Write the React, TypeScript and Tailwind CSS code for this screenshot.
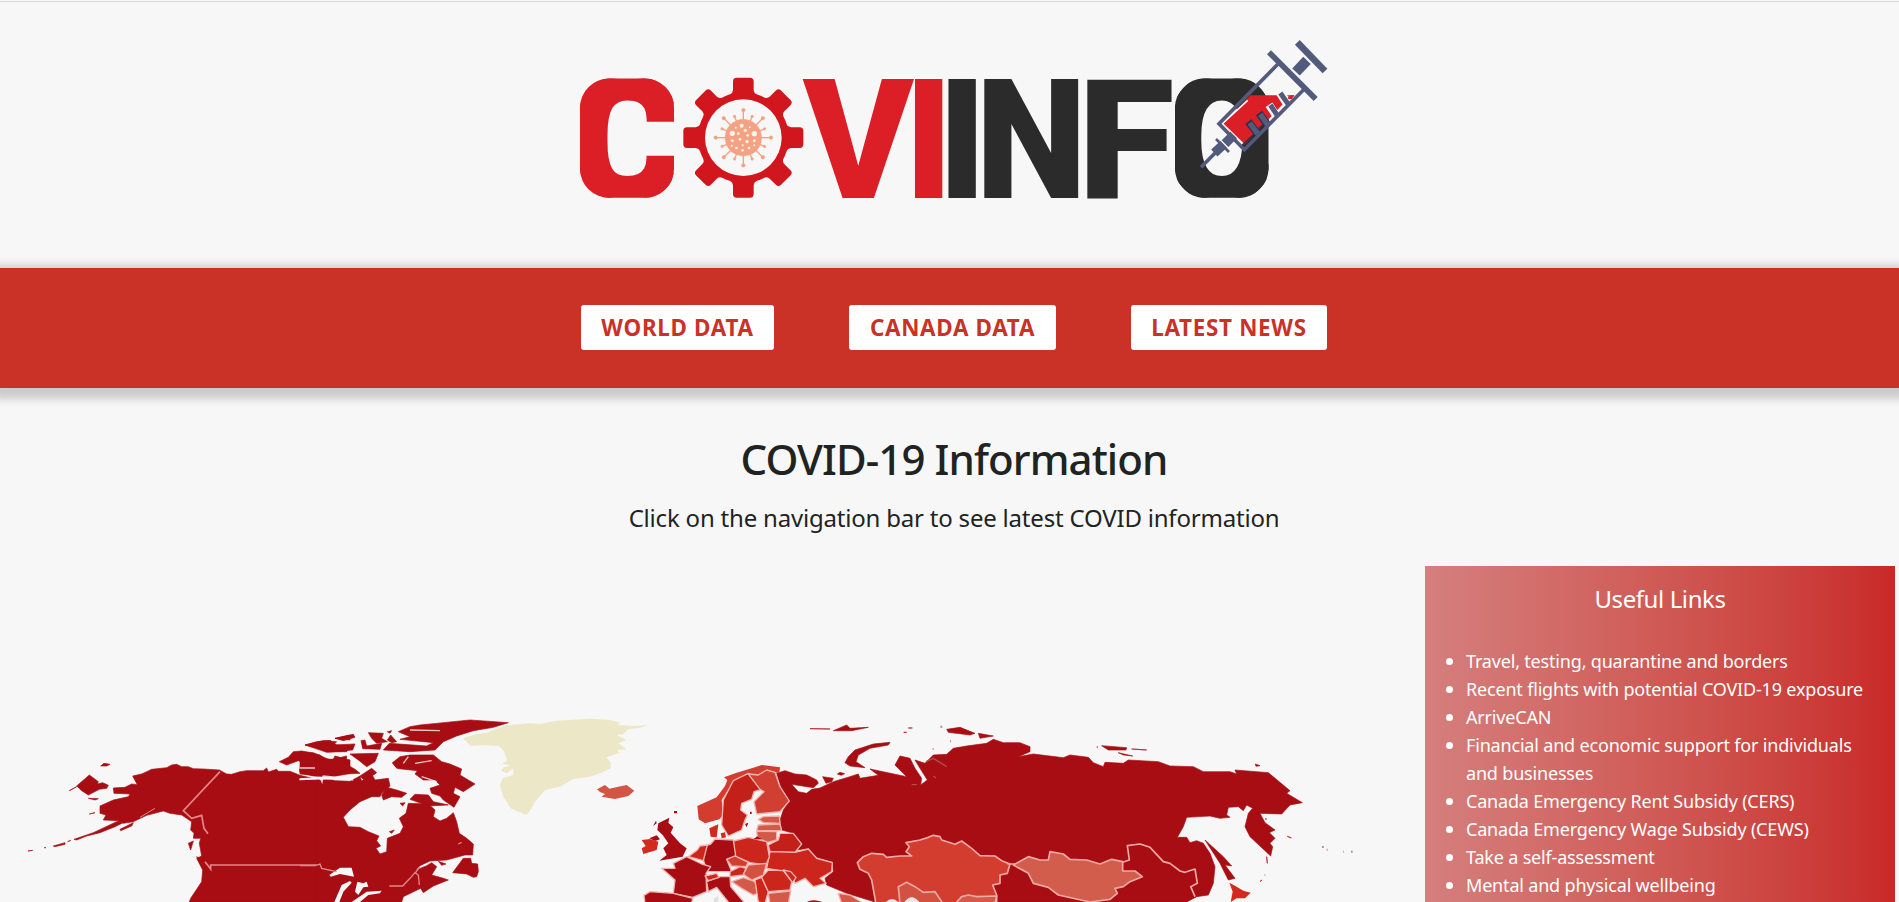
import React from "react";

const DARK = "#a70d13";
const RED = "#cb251c";
const MID = "#d23d30";
const PALE = "#d35a49";
const SEA = "#f7f7f7";

const links = [
  "Travel, testing, quarantine and borders",
  "Recent flights with potential COVID-19 exposure",
  "ArriveCAN",
  "Financial and economic support for individuals and businesses",
  "Canada Emergency Rent Subsidy (CERS)",
  "Canada Emergency Wage Subsidy (CEWS)",
  "Take a self-assessment",
  "Mental and physical wellbeing",
];

const virusDots = [
  [545, 317, 6], [517, 340, 8], [583, 341, 8], [556, 331, 5], [527, 323, 3], [569, 322, 3], [535, 341, 4], [563, 346, 4],
  [540, 358, 4], [517, 362, 4], [561, 365, 5], [583, 362, 4], [529, 384, 4], [548, 391, 4], [567, 384, 4], [515, 377, 3],
  [548, 376, 3], [583, 376, 3],
];

function Letter({ c, x, y = 198, sx, sy = 0.839, fill, bold = 0 }: { c: string; x: number; y?: number; sx: number; sy?: number; fill: string; bold?: number }) {
  return (
    <text transform={`translate(${x} ${y}) scale(${sx} ${sy})`} fontSize={200} fill={fill} stroke={fill} strokeWidth={bold} className="font-['Roboto',sans-serif] font-black">
      {c}
    </text>
  );
}

function Logo() {
  const r = "#dc1f26";
  const k = "#2b2b2b";
  return (
    <svg width="750" height="215" viewBox="579 30 750 215" role="img" className="block overflow-visible">
      <clipPath id="logo-c">
        <rect x="580" y="78.5" width="94" height="119.3" rx="29" />
      </clipPath>
      <clipPath id="logo-o">
        <rect x="1175" y="78.5" width="93.5" height="119.3" rx="29" />
      </clipPath>
      <g clipPath="url(#logo-c)">
        <Letter c="C" x={568.1} y={200.4} sx={0.885} sy={0.87} fill={r} bold={6} />
      </g>
      <Letter c="V" x={803} sx={0.837} fill={r} />
      <Letter c="I" x={904.5} sx={0.8} fill={r} />
      <Letter c="I" x={938} sx={0.8} fill={k} />
      <Letter c="N" x={975.8} sx={0.79} fill={k} />
      <Letter c="F" x={1077.7} sx={0.885} fill={k} />
      <g clipPath="url(#logo-o)">
        <Letter c="O" x={1163.4} y={200.4} sx={0.845} sy={0.87} fill={k} bold={6} />
      </g>
      <g transform="translate(560 20) scale(.33333)">
        <g fill="#d2161e">
          {[0, 45, 90, 135, 180, 225, 270, 315].map((a) => (
            <path key={a} transform={`rotate(${a} 550 353)`} d="M519 240V184Q519 173 530 173H570Q581 173 581 184V210Q582 220 590 224V240H510V224Q518 220 519 210Z" />
          ))}
          <circle cx="550" cy="353" r="136" />
        </g>
        <circle cx="550" cy="353" r="115" fill={SEA} />
        <g fill="#f4a184" stroke="#f4a184">
          {[0, 45, 90, 135, 180, 225, 270, 315].map((a) => (
            <g key={a} transform={`rotate(${a} 550 353)`}>
              <path d="M550 300V270" strokeWidth="4" />
              <circle cx="550" cy="270" r="5.5" />
            </g>
          ))}
          {[22.5, 67.5, 112.5, 157.5, 202.5, 247.5, 292.5, 337.5].map((a) => (
            <g key={a} transform={`rotate(${a} 550 353)`}>
              <path d="M550 300V284" strokeWidth="4" />
              <circle cx="550" cy="284" r="4" />
            </g>
          ))}
          <circle cx="550" cy="353" r="55" />
        </g>
        <g fill="#fbf3ee">
          {virusDots.map(([x, y, s]) => (
            <circle key={`${x}-${y}`} cx={x} cy={y} r={s} />
          ))}
        </g>
      </g>
      <g transform="translate(1195 35) scale(.33333)" stroke="#525b7b" fill="none">
        <path d="M84 267L166 181H268L266 200L286 181H298L290 192L278 192L148 330Z" fill="#dc1f26" stroke="none" />
        <path d="M228 256L268 216L300 190L325 165" stroke={SEA} strokeWidth="6" />
        <path d="M158 196L82 266L146 328" stroke={SEA} strokeWidth="5" />
        <path d="M138 334L184 291L160 266M192 280L206 268L188 244" stroke="#33304a" strokeWidth="5" />
        <path d="M188 296L160 260M218 270L192 234" stroke="#33304a" strokeWidth="23" />
        <path d="M188 296L164 264M218 270L196 238" strokeWidth="16" />
        <path d="M246 245L222 209M279 212L254 173" stroke={SEA} strokeWidth="24" />
        <path d="M250 246L226 210M280 208L256 174" strokeWidth="15" />
        <path d="M276 181H298L289 193Z" fill="#dc1f26" stroke="none" />
        <path d="M248 88L72 266L148 344L325 165" strokeWidth="11" />
        <path d="M222 52L362 192" strokeWidth="17" />
        <path d="M307 22L390 108" strokeWidth="20" />
        <path d="M303 111L336 76" strokeWidth="31" />
        <path d="M116 300L90 326" strokeWidth="28" />
        <path d="M63 312L102 351" strokeWidth="8" />
        <path d="M86 328L58 354" strokeWidth="28" />
        <path d="M64 350L18 397" strokeWidth="11" />
      </g>
    </svg>
  );
}

function WorldMap() {
  return (
    <svg width="1400" height="202" viewBox="0 700 1400 202" className="block">
      <g transform="translate(0 700) scale(.33333)">
        <g fill={DARK} stroke={DARK} strokeWidth="2" strokeLinejoin="round">
          <path d="M398 228L425 222 440 215 455 208 500 203 515 195 530 193 545 200 565 200 580 206 610 207 658 210 680 222 695 223 720 215 740 212 790 212 800 204 805 216 830 208 835 214 870 214 900 226 960 240 1000 240V606H568L572 595 590 568 605 545 608 510 590 475 605 468 598 430 602 415 580 415 582 400 572 390 575 365 545 345 510 340 490 333 440 346 400 365 370 370 355 362 310 360 318 345 300 340V318L340 300 385 290 390 282 342 280 340 264 375 262 395 252 412 254Z" />
          <path d="M402 352L345 380 300 398 260 408 230 420 222 418 280 398 350 365ZM160 438L195 428V433L165 440ZM360 388L400 368 395 378 362 392ZM230 258L268 225 295 245 292 252 308 248 325 256 320 265 298 268 265 285 245 272ZM208 272L230 260ZM302 198L312 190 330 193 320 198ZM265 295L295 296 285 300ZM268 342L285 338ZM565 430L580 423 575 440 572 450ZM590 470L615 485 625 500 608 505ZM84 453L98 451ZM133 443H138ZM203 425L212 421Z" />
          <path d="M838 185L865 172 880 155 905 153 930 158 960 165 975 177 1000 178 1005 168 1050 180V220L1000 230 940 228 900 218 898 205 915 190 895 182 860 195ZM915 135L950 125 990 121 1010 135 1050 140 1040 155 985 156 960 145ZM1005 115L1050 105V120Z" />
        </g>
        <path d="M895 204H945M898 238L960 236 966 248 968 232 1000 236" stroke={SEA} strokeWidth="5" fill="none" />
        <g fill="none" stroke="#e3888b" strokeWidth="5">
          <path d="M660 215L550 332 575 355 605 346 612 385 624 401M615 485L632 507V495H955L970 504 1010 515" />
          <path d="M420 352L465 325" strokeWidth="3" />
        </g>
      </g>
      <g transform="translate(300 700) scale(.33333)">
        <g fill={DARK} stroke={DARK} strokeWidth="2" strokeLinejoin="round">
          <path d="M50 240L150 244 180 228 185 243 215 222 225 240 265 235 270 258 245 280 240 290 215 290 180 305 150 330 130 352 145 380 180 382 205 395 237 408 230 422 242 438 228 445 240 462 260 455 262 415 300 400 310 380 298 355 318 340 325 310 385 312 405 330 400 350 420 363 440 355 460 338 470 365 478 400 500 415 520 432 518 465 495 465 470 472 440 480 390 483 360 497 345 512 380 497 395 488 410 500 395 525 430 535 445 540 400 558 370 578 362 565 310 590 305 606H50Z" />
          <path d="M458 518L490 475 512 475 515 490 533 492 535 515 530 530 520 532 500 522ZM275 190L300 170 330 165 400 165 425 185 450 192 485 207 480 225 525 252 490 275 465 262 460 280 480 290 462 322 430 300 420 288 395 280 390 265 420 255 405 240 370 240 345 222 352 212 285 205ZM330 298L345 283 385 285 400 305 445 315 385 318ZM360 75L430 68 510 60 625 68 580 82 520 92 470 108 430 125 405 150 330 155 250 150 268 130 380 138 400 128 300 118 330 110 295 95 330 80ZM15 135L70 122 110 125 100 135 165 132 158 150 80 157 45 145ZM105 115L160 103 165 112 130 122ZM205 98L250 100 245 115 262 125 230 130 215 115ZM0 155L40 158 90 180 140 168 138 192 165 208 180 220 130 222 60 228 0 222ZM150 162L235 160 225 185 200 200 175 180ZM180 228L215 205 230 218 195 243ZM260 262L290 270 320 280 305 292 275 290 250 300 245 285ZM183 122L195 120 200 138 245 130 240 148 188 146ZM262 95L275 92 270 100ZM272 105L290 125 275 128 262 120ZM300 310L315 308 308 318ZM268 395L283 390 275 400ZM415 484L438 492 425 496Z" />
        </g>
        <path d="M88 525L120 503 155 503 162 530 120 522 92 530ZM150 543L125 555 103 606H118L130 575 155 548ZM172 545L190 550 200 545 205 560 190 562 175 585 165 575ZM155 606L200 575 245 572 240 580 205 585 180 606ZM245 185L262 170 285 200 300 215 298 235 275 236 245 210Z" fill={SEA} />
        <path d="M310 190L325 170M345 190L395 182M365 230L410 245M0 204H45M0 237L60 232 66 246 70 228 115 232 160 240M330 90L420 92" stroke={SEA} strokeWidth="4" fill="none" opacity=".8" />
        <path d="M268 558H308L330 535 345 518 355 525 358 555M0 497L45 497 60 492 65 505 110 515M345 520L360 500M475 432L485 427" stroke="#e3888b" strokeWidth="4" fill="none" />
        <path fill="#ece7c6" d="M490 115L530 102 560 98 620 75 690 70 720 72 770 62 870 56 930 60 960 68 955 75 1000 78 1045 76 1020 83 985 88 970 102 950 105 980 120 955 130 980 148 950 150 960 158 920 172 932 188V205L905 218 870 230 820 237 780 260 735 270 705 305 695 325 680 345 655 335 632 325 620 305 610 290 600 255 608 235 640 225V205L620 220 603 212 610 202 632 198 605 190 622 182 610 150 595 138 550 136 510 137Z" />
        <path fill="#d35644" d="M891 268L915 255 928 266 955 260 980 255 1003 272 985 288 945 297 905 290 915 282 900 276Z" />
      </g>
      <g transform="translate(800 700) scale(.33333)">
        <g fill={DARK} stroke={DARK} strokeWidth="2" strokeLinejoin="round">
          <path d="M-70 220L-45 212 -15 222 20 225 50 240 55 250 40 263 -25 253 -5 275 20 280 35 268 60 264 100 245 150 230 175 222 180 235 235 226 210 207 320 230 285 195 300 168 330 175 345 205 365 235 362 255 382 240 360 205 345 180 375 190 400 165 440 163 460 145 500 138 560 130 580 118 610 128 660 128 690 140 690 155 655 170 700 162 790 173 810 165 865 172 880 188 910 200 915 187 970 190 985 180 1075 185 1110 198 1180 200 1210 215 1290 215 1310 222 1305 210 1405 218 1470 272 1460 280 1507 308 1470 315 1445 342 1380 340 1395 368 1425 390 1408 398 1425 415 1410 430 1418 440 1412 468 1350 410 1335 380 1345 340 1358 325 1340 315 1330 332 1315 320 1285 322 1280 345 1290 352 1260 355 1230 348 1160 352 1150 380 1132 412 1160 412 1170 428 1190 422 1210 430 1230 460 1245 500 1240 550 1225 585 1190 590 1160 606H225L140 580 80 555 75 535 100 515 97 485 50 472 25 445 -10 450 5 432 -20 400 -55 390 -60 360 -50 330 -32 303 -55 270Z" />
          <path d="M135 188L145 170 165 150 220 132 270 127 265 135 210 145 175 165 168 185 195 203 150 198ZM30 86L90 87ZM100 92L140 75 150 85 205 82 155 92ZM440 88L480 82 525 100 510 105 445 97ZM535 100L580 108 540 115ZM325 84H337ZM311 97H320ZM112 222L120 217 134 221 124 226ZM68 230L100 235 95 245 78 250ZM905 137L980 143 978 150 925 150ZM995 147L1040 150ZM955 158L998 168 970 165ZM1366 192L1380 197 1368 199ZM1215 420L1270 470 1295 498 1275 495 1305 535 1285 540 1260 490ZM1400 470L1402 490ZM1380 545L1386 540ZM1395 357H1400ZM1462 409L1474 414Z" />
          <path opacity=".5" d="M421 80H427M450 124H453M398 147H401M890 141H894M1566 441H1571M1580 449H1583M1629 455H1631M1653 455H1658M1394 525H1396" strokeWidth="6" />
        </g>
        <g stroke="#f0a9a4" strokeWidth="5" strokeLinejoin="round">
          <path fill={MID} d="M172 488L190 470 215 460 250 463 260 472 300 468 335 468 318 455 328 440 318 428 360 420 385 412 400 406 420 410 425 420 465 433 485 423 515 445 540 467 585 468 605 482 630 492 622 520 600 525 600 550 578 555 590 585V612H228L215 540 205 520 180 508Z" />
          <path fill="#d35140" d="M300 612L295 560 320 547 345 560 370 577 405 575 430 612Z" />
          <path fill={PALE} d="M465 612L485 590 505 585 530 590 590 588 585 612Z" />
          <path fill="#d25d4c" d="M640 495L685 470 720 480 745 480 750 455 790 462 810 478 860 480 900 492 935 478 968 485V513H1005L1027 530 990 545 970 560 945 565 952 580 930 598 870 606 775 585 745 562 700 550 685 520Z" />
          <path fill="none" d="M968 487L988 480 982 437 1020 432 1050 442 1090 485 1110 490 1140 513 1155 517 1185 507 1192 550 1172 560 1185 590M622 492H645" />
        </g>
        <path d="M258 606Q275 588 295 606ZM313 606Q335 578 358 606Z" fill="#e8e8e8" />
        <path fill="#d32a20" d="M1288 548L1310 560 1330 572 1352 578 1335 595 1310 595 1292 606 1298 575Z" />
        <path fill="none" stroke="#b84a4b" strokeWidth="4" d="M378 185L400 175 440 200M400 228L408 234M335 254H350" />
      </g>
      <g transform="translate(620 740) scale(.33333)" strokeLinejoin="round">
        <g stroke="#f2b3ae" strokeWidth="4">
          <path fill={MID} stroke="none" d="M232 198L290 172 315 138 322 120 312 112 350 98 400 83 425 75 480 82 478 100 440 92 420 108 385 100 340 125 305 180 310 225 298 238 255 250 236 238Z" />
          <path fill="#c4201a" d="M340 122L385 100 412 112 425 148 402 155 395 178 365 190 362 210 382 225 375 240 365 270 325 288 305 255 310 180Z" />
          <path fill="#d03f31" d="M385 102L415 105 440 90 465 97 480 140 508 183 480 215 410 222 402 185 432 155 420 148Z" />
          <path fill={PALE} d="M415 238L430 230 478 228 480 250 430 248ZM410 272L415 255 480 252 485 272ZM410 274L470 275V300L440 308 412 290Z" />
          <path fill="#c4201a" d="M445 315L475 300 480 280 520 280 545 312 525 337 450 335Z" />
          <path fill={RED} d="M440 385L450 335 525 337 565 327 590 355 637 368 635 395 600 415 618 430 580 440 555 415 525 430 515 398Z" />
          <path fill={RED} d="M340 303L385 292 440 305 448 350 438 375 390 368 345 348Z" />
          <path fill={DARK} d="M250 320L272 312 285 297 340 300 347 348 320 358 335 395 262 395 250 360Z" />
          <path fill={DARK} d="M125 385L165 385 160 370 200 350 245 372 272 380 258 400 260 455 218 472 160 460 165 420Z" />
          <path fill={RED} d="M205 350L232 330 240 318 262 315 250 362 225 355Z" />
          <path fill={DARK} d="M72 466L90 455 160 460 218 475 215 490H75Z" />
          <path fill={DARK} d="M260 425L300 410 330 410 332 440 375 490H328L290 442 265 455Z" />
          <path fill={RED} d="M255 408L290 400 297 412 265 422ZM330 395L360 380 378 385 370 405 330 410Z" />
          <path fill={MID} d="M320 358L345 348 385 367 378 380 335 378Z" />
          <path fill="#d35140" d="M370 403L385 375 440 370 430 405 395 420Z" />
          <path fill={PALE} d="M335 425L370 413 405 425 412 460 400 465 365 445Z" />
          <path fill={RED} d="M405 420L425 412 445 455 435 490 415 486Z" />
          <path fill={RED} d="M425 412L445 390 490 392 515 425 510 450 445 455Z" />
          <path fill={RED} d="M490 390L512 395 528 412 518 428Z" />
          <path fill={PALE} d="M445 460L512 453 505 492H450ZM655 460L690 465 730 490H665Z" />
        </g>
        <path fill={DARK} d="M115 250L148 233 145 248 160 262 152 278 180 310 200 325 188 350 118 362 140 345 130 325 145 310 128 285 112 270ZM88 295L110 286 120 298 105 303ZM99 258L108 242 110 250ZM162 213H171V220H162ZM400 298L412 289 428 298ZM390 215H395V222H390ZM375 252L385 248 380 262ZM555 490Q575 472 612 488Z" />
        <path fill="#d32a20" d="M65 300L90 297 115 305 110 330 70 342 65 325 77 318ZM268 265L295 253 290 292 272 290ZM302 280L315 277 318 292 305 295Z" />
        <path fill="#e0e0e0" d="M282 475L295 468V486H282Z" />
        <path fill={SEA} d="M548 425L560 425 580 442 560 455 530 440Z" />
      </g>
    </svg>
  );
}

export default function App() {
  return (
    <div className="h-[902px] overflow-hidden bg-[#f7f7f7] pt-px font-['Noto_Sans','Open_Sans',sans-serif] text-[#212323]">
      <header className="flex h-[267px] justify-center border-t border-[#d9dcdc] pt-[28px] pl-[9px]">
        <Logo />
      </header>
      <nav className="relative flex h-[120px] items-center justify-center gap-[75px] bg-[#ca3127] pb-px pl-[9px] text-[22.4px] font-bold tracking-[0.7px] text-[#ca3127] shadow-[0_4px_8px_7px_rgba(0,0,0,0.18)]">
        <a className="flex h-[45px] w-[193px] items-center justify-center rounded-[3px] bg-white whitespace-nowrap">WORLD DATA</a>
        <a className="flex h-[45px] w-[207px] items-center justify-center rounded-[3px] bg-white whitespace-nowrap">CANADA DATA</a>
        <a className="flex h-[45px] w-[196px] items-center justify-center rounded-[3px] bg-white whitespace-nowrap">LATEST NEWS</a>
      </nav>
      <main>
        <div className="flex h-[178px] flex-col items-center pt-[43px] pl-[9px]">
          <h1 className="text-[42px] leading-[56px] font-medium tracking-[-0.9px] whitespace-nowrap">COVID-19 Information</h1>
          <p className="mt-[13px] text-[24px] leading-[36px] tracking-[-0.2px] whitespace-nowrap">Click on the navigation bar to see latest COVID information</p>
        </div>
        <div className="flex">
          <div className="w-[1425px] pt-[134px]">
            <WorldMap />
          </div>
          <aside className="h-[420px] w-[470px] bg-linear-to-r from-[#d47f7e] to-[#c82828] pt-[15px] text-white">
            <h2 className="text-center text-[24px] leading-[36px] tracking-[-0.4px]">Useful Links</h2>
            <ul className="mt-[30px] pr-[20px] pl-[21px] text-[18px] leading-[28px] tracking-[-0.18px]">
              {links.map((l) => (
                <li key={l} className="flex">
                  <span className="mt-[11px] mr-[13px] size-[7px] shrink-0 rounded-full bg-white" />
                  <span>{l}</span>
                </li>
              ))}
            </ul>
          </aside>
        </div>
      </main>
    </div>
  );
}
